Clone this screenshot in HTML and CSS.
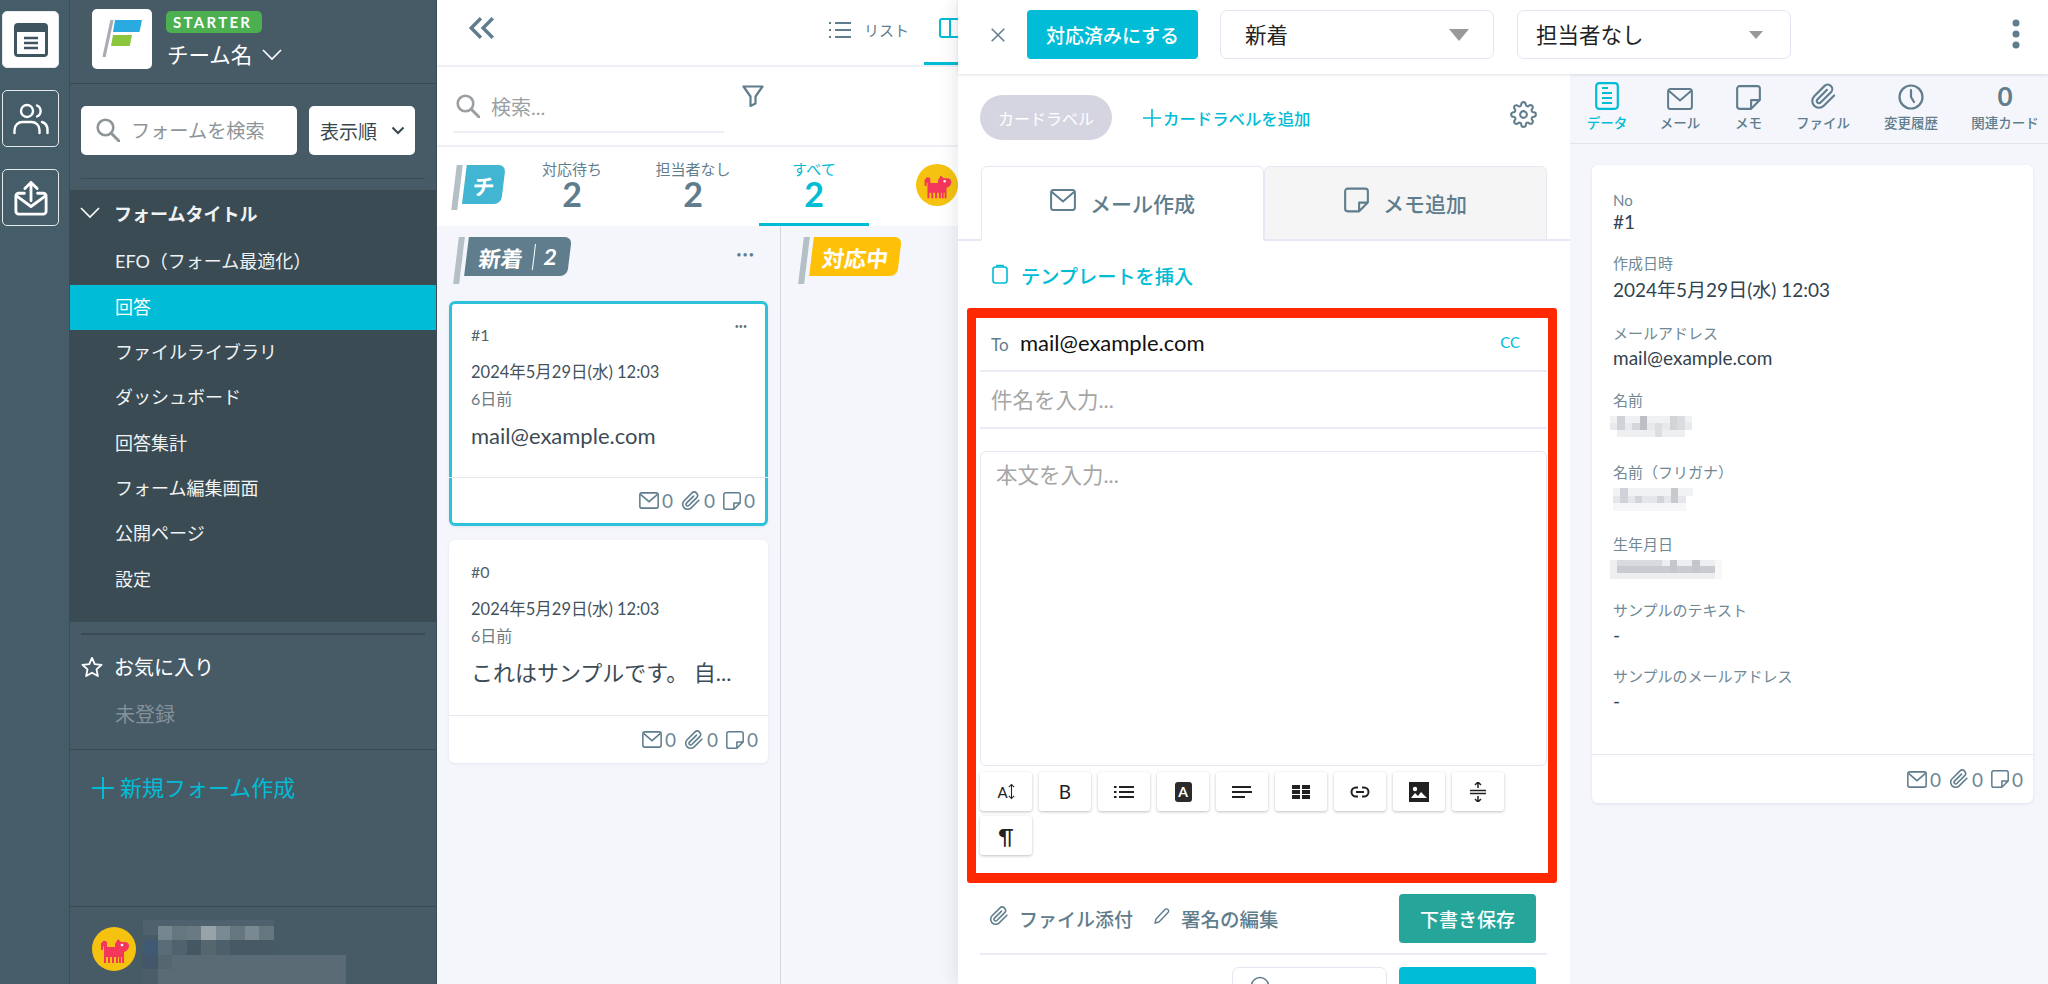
FILE: index.html
```html
<!DOCTYPE html>
<html lang="ja">
<head>
<meta charset="utf-8">
<title>回答</title>
<link rel="stylesheet" href="styles.css">
</head>
<body>
<svg class="defs" width="0" height="0">
  <symbol id="i-mail" viewBox="0 0 26 22"><rect x="1.100" y="1.100" width="23.800" height="19.800" rx="2.500" fill="none" stroke="currentColor" stroke-width="2"/><path d="M2 3l11 9.500L24 3" fill="none" stroke="currentColor" stroke-width="2"/></symbol>
  <symbol id="i-memo" viewBox="0 0 24 24"><path d="M14.500 22.900H3.500a2.400 2.400 0 0 1-2.400-2.400V3.500a2.400 2.400 0 0 1 2.400-2.400h17a2.400 2.400 0 0 1 2.400 2.400V14.500zM22.900 14.500h-8.400v8.400" fill="none" stroke="currentColor" stroke-width="2" stroke-linejoin="round"/></symbol>
  <symbol id="i-clip" viewBox="0 0 24 24"><path d="M21.440 11.050l-9.190 9.190a6 6 0 0 1-8.490-8.490l9.190-9.190a4 4 0 0 1 5.660 5.660l-9.200 9.190a2 2 0 0 1-2.830-2.830l8.490-8.480" fill="none" stroke="currentColor" stroke-width="1.900" stroke-linecap="round" stroke-linejoin="round"/></symbol>
  <symbol id="i-search" viewBox="0 0 24 24"><circle cx="9.500" cy="9.500" r="7.800" fill="none" stroke="currentColor" stroke-width="2.600"/><path d="m15.500 15.500 7.500 7.500" stroke="currentColor" stroke-width="3" stroke-linecap="round"/></symbol>
  <symbol id="i-dog" viewBox="0 0 44 44"><circle cx="22" cy="22" r="22" fill="#f5c30f"/><path d="M10 16c0-3 5-3 5 0v4h8v-3l3-5 3 3h4c3 0 4 2 4 4 0 3-2 5-5 6v11h-2v-6h-1v6h-2v-6h-1v6h-2v-6h-2v6h-2v-6h-2v6h-2v-6h-2v6h-2V20c0-1-1-1-1 0v3H9v-7z" fill="#f5365c"/><circle cx="30" cy="18" r="1.300" fill="#fff"/></symbol>
</svg>

<div class="app">
  <nav class="rail">
    <a class="rail-btn is-active"><svg viewBox="0 0 36 36" width="36" height="36"><rect x="1" y="1" width="34" height="34" rx="4" fill="#3f5560"/><rect x="4" y="10" width="28" height="22" fill="#fff"/><path d="M11 16h14M11 21h14M11 26h14" stroke="#3f5560" stroke-width="2.400"/></svg></a>
    <a class="rail-btn"><svg viewBox="0 0 36 32" width="36" height="32" fill="none" stroke="#fff" stroke-width="2.400" stroke-linecap="round"><circle cx="14" cy="8" r="6"/><path d="M1.500 30v-3c0-5 4-8 8-8h9c4 0 8 3 8 8v3M24 2.500a6 6 0 0 1 0 11M29 19c3 1 5.500 4 5.500 8v3"/></svg></a>
    <a class="rail-btn"><svg viewBox="0 0 36 38" width="34" height="36" fill="none" stroke="#fff" stroke-width="3" stroke-linecap="round" stroke-linejoin="round"><path d="M11 14H5a3 3 0 0 0-3 3v16a3 3 0 0 0 3 3h26a3 3 0 0 0 3-3V17a3 3 0 0 0-3-3h-6"/><path d="m3 17 15 11 15-11M18 22V2.500M11.500 9 18 2.500 24.500 9"/></svg></a>
  </nav>

  <aside class="side">
    <header class="side-head">
      <div class="logo"><svg viewBox="0 0 60 60" width="60" height="60"><path d="M20 11 12 48" stroke="#a9adb3" stroke-width="3.200"/><path d="M23 11h27l-2.500 12H21z" fill="#29abe2"/><path d="M21 26h19l-2.200 11H19z" fill="#8cc63f"/></svg></div>
      <div class="team">
        <span class="plan">STARTER</span>
        <span class="team-name">チーム名<svg class="team-caret" viewBox="0 0 20 12" width="20" height="12"><path d="m1 1 9 9 9-9" fill="none" stroke="#fff" stroke-width="1.600"/></svg></span>
      </div>
    </header>
    <div class="side-tools">
      <div class="form-search"><svg width="24" height="24"><use href="#i-search"/></svg><span>フォームを検索</span></div>
      <div class="form-sort"><span>表示順</span><svg viewBox="0 0 14 9" width="14" height="9"><path d="m1.500 1.500 5.500 5.500 5.500-5.500" fill="none" stroke="#37474f" stroke-width="2"/></svg></div>
    </div>
    <hr class="side-rule">
    <ul class="forms">
      <li class="forms-title"><svg viewBox="0 0 20 12" width="20" height="12"><path d="m1 1 9 9 9-9" fill="none" stroke="#fff" stroke-width="1.600"/></svg>フォームタイトル</li>
      <li>EFO（フォーム最適化）</li>
      <li class="is-active">回答</li>
      <li>ファイルライブラリ</li>
      <li>ダッシュボード</li>
      <li>回答集計</li>
      <li>フォーム編集画面</li>
      <li>公開ページ</li>
      <li>設定</li>
    </ul>
    <hr class="side-rule side-rule-b">
    <div class="fav"><svg viewBox="0 0 24 24" width="22" height="22"><path d="m12 2 3 6.800 7.400.8-5.500 5 1.500 7.300L12 18.200l-6.400 3.700 1.500-7.300-5.500-5 7.400-.8z" fill="none" stroke="#fff" stroke-width="2" stroke-linejoin="round"/></svg>お気に入り</div>
    <div class="fav-empty">未登録</div>
    <div class="new-form"><svg viewBox="0 0 22 22" width="22" height="22"><path d="M11 0v22M0 11h22" stroke="#00bcd4" stroke-width="2"/></svg>新規フォーム作成</div>
    <footer class="side-foot">
      <svg class="foot-avatar" width="44" height="44"><use href="#i-dog"/></svg>
      <svg class="foot-blur" viewBox="0 0 14 4.400" width="203" height="64" shape-rendering="crispEdges">
        <g fill="#556873"><rect x="0" y="0" width="9" height="1" opacity=".5"/></g>
        <rect x="1" y=".4" width="1" height="1" fill="#76868f"/><rect x="2" y=".4" width="1" height="1" fill="#66767f"/><rect x="3" y=".4" width="1" height="1" fill="#6a7a83"/><rect x="4" y=".4" width="1" height="1" fill="#98a3a9"/><rect x="5" y=".4" width="1" height="1" fill="#7a8a93"/><rect x="6" y=".4" width="1" height="1" fill="#66767f"/><rect x="7" y=".4" width="1" height="1" fill="#7a8891"/><rect x="8" y=".4" width="1" height="1" fill="#66767f"/>
        <rect x="0" y="1.400" width="1" height="1" fill="#415a74"/><rect x="1" y="1.400" width="1" height="1" fill="#5a6c76"/><rect x="2" y="1.400" width="1" height="1" fill="#4f626e"/><rect x="3" y="1.400" width="1" height="1" fill="#455862"/><rect x="4" y="1.400" width="1" height="1" fill="#55666f"/><rect x="5" y="1.400" width="1" height="1" fill="#4d5f6a"/><rect x="6" y="1.400" width="3" height="1" fill="#465964"/>
        <rect x="0" y="2.400" width="1" height="1" fill="#43566a"/><rect x="1" y="2.400" width="1" height="1" fill="#55666f"/><rect x="2" y="2.400" width="12" height="1" fill="#5a6b75"/>
        <rect x="0" y="3.400" width="1" height="1" fill="#4a5d69"/><rect x="1" y="3.400" width="13" height="1" fill="#5a6b75"/>
      </svg>
    </footer>
  </aside>

  <main class="board">
    <div class="board-top">
      <svg class="collapse" viewBox="0 0 26 22" width="28" height="24"><path d="M12 2 3 11l9 9M23 2l-9 9 9 9" fill="none" stroke="#5f7d8c" stroke-width="3.200"/></svg>
      <span class="view-tab"><svg viewBox="0 0 22 18" width="22" height="18"><path d="M6 2h16M6 9h16M6 16h16" stroke="#5f7d8c" stroke-width="2"/><path d="M0 2h3M0 9h3M0 16h3" stroke="#5f7d8c" stroke-width="2" stroke-dasharray="2 1"/></svg>リスト</span>
      <span class="view-tab is-active"><svg viewBox="0 0 22 20" width="22" height="20"><rect x="1" y="1" width="20" height="18" rx="2" fill="none" stroke="#00bcd4" stroke-width="2"/><path d="M11 1v18" stroke="#00bcd4" stroke-width="2"/></svg></span>
    </div>
    <div class="board-search">
      <div class="board-input"><svg width="24" height="24"><use href="#i-search"/></svg><span>検索...</span></div>
      <svg class="filter" viewBox="0 0 22 22" width="22" height="22"><path d="M1.500 1.500h19l-7 10v7l-5 2.500v-9.500z" fill="none" stroke="#5f7d8c" stroke-width="2.200" stroke-linejoin="round"/></svg>
    </div>
    <div class="stats">
      <div class="flag flag-team"><i></i><b>チ</b></div>
      <div class="stat"><span>対応待ち</span><strong>2</strong></div>
      <div class="stat"><span>担当者なし</span><strong>2</strong></div>
      <div class="stat is-active"><span>すべて</span><strong>2</strong></div>
      <svg class="stat-avatar" width="42" height="42" viewBox="0 0 44 44"><use href="#i-dog"/></svg>
    </div>
    <div class="columns">
      <section class="col">
        <div class="col-head">
          <div class="flag flag-new"><i></i><b>新着<u></u>2</b></div>
          <span class="dots">•••</span>
        </div>
        <article class="card is-selected">
          <div class="card-body">
            <span class="more">•••</span>
            <div class="card-no">#1</div>
            <div class="card-date">2024年5月29日(水) 12:03</div>
            <div class="card-ago">6日前</div>
            <div class="card-title">mail@example.com</div>
          </div>
          <div class="counts">
            <span><svg width="20" height="17"><use href="#i-mail"/></svg>0</span>
            <span><svg width="20" height="20"><use href="#i-clip"/></svg>0</span>
            <span><svg width="18" height="18"><use href="#i-memo"/></svg>0</span>
          </div>
        </article>
        <article class="card">
          <div class="card-body">
            <div class="card-no">#0</div>
            <div class="card-date">2024年5月29日(水) 12:03</div>
            <div class="card-ago">6日前</div>
            <div class="card-title">これはサンプルです。 自...</div>
          </div>
          <div class="counts">
            <span><svg width="20" height="17"><use href="#i-mail"/></svg>0</span>
            <span><svg width="20" height="20"><use href="#i-clip"/></svg>0</span>
            <span><svg width="18" height="18"><use href="#i-memo"/></svg>0</span>
          </div>
        </article>
      </section>
      <section class="col col-b">
        <div class="col-head"><div class="flag flag-doing"><i></i><b>対応中</b></div></div>
      </section>
    </div>
  </main>

  <div class="detail">
    <div class="topbar">
      <svg class="close" viewBox="0 0 14 14" width="14" height="14"><path d="m.7.7 12.600 12.600M13.300.7.700 13.300" stroke="#5f7d8c" stroke-width="1.500"/></svg>
      <button class="btn btn-done">対応済みにする</button>
      <div class="select select-a"><span>新着</span><i class="tri"></i></div>
      <div class="select select-b"><span>担当者なし</span><i class="tri tri-s"></i></div>
      <svg class="kebab" viewBox="0 0 8 30" width="8" height="30"><circle cx="4" cy="4" r="3.500"/><circle cx="4" cy="15" r="3.500"/><circle cx="4" cy="26" r="3.500"/></svg>
    </div>
    <div class="detail-row">
      <div class="compose">
        <div class="labels">
          <span class="pill">カードラベル</span>
          <span class="add-label"><svg viewBox="0 0 18 18" width="18" height="18"><path d="M9 0v18M0 9h18" stroke="#00bcd4" stroke-width="1.600"/></svg>カードラベルを追加</span>
          <svg class="gear" viewBox="0 0 24 24" width="27" height="27" fill="none" stroke="#5f7d8c" stroke-width="1.800"><circle cx="12" cy="12" r="3"/><path d="M19.400 15a1.650 1.650 0 0 0 .33 1.820l.06.06a2 2 0 0 1 0 2.830 2 2 0 0 1-2.830 0l-.06-.06a1.650 1.650 0 0 0-1.820-.33 1.650 1.650 0 0 0-1 1.510V21a2 2 0 0 1-2 2 2 2 0 0 1-2-2v-.09A1.650 1.650 0 0 0 9 19.400a1.650 1.650 0 0 0-1.820.33l-.06.06a2 2 0 0 1-2.830 0 2 2 0 0 1 0-2.830l.06-.06a1.650 1.650 0 0 0 .33-1.820 1.650 1.650 0 0 0-1.510-1H3a2 2 0 0 1-2-2 2 2 0 0 1 2-2h.09A1.650 1.650 0 0 0 4.600 9a1.650 1.650 0 0 0-.33-1.820l-.06-.06a2 2 0 0 1 0-2.830 2 2 0 0 1 2.830 0l.06.06a1.650 1.650 0 0 0 1.820.33H9a1.650 1.650 0 0 0 1-1.510V3a2 2 0 0 1 2-2 2 2 0 0 1 2 2v.09a1.650 1.650 0 0 0 1 1.510 1.650 1.650 0 0 0 1.820-.33l.06-.06a2 2 0 0 1 2.830 0 2 2 0 0 1 0 2.830l-.06.06a1.650 1.650 0 0 0-.33 1.820V9a1.650 1.650 0 0 0 1.510 1H21a2 2 0 0 1 2 2 2 2 0 0 1-2 2h-.09a1.650 1.650 0 0 0-1.510 1z"/></svg>
        </div>
        <div class="tabs">
          <div class="tab is-active"><svg width="26" height="22"><use href="#i-mail"/></svg>メール作成</div>
          <div class="tab"><svg width="25" height="28"><use href="#i-memo"/></svg>メモ追加</div>
        </div>
        <div class="template"><svg viewBox="0 0 16 20" width="16" height="20"><rect x="1" y="3" width="14" height="16" rx="2.500" fill="none" stroke="#00bcd4" stroke-width="1.600"/><path d="M5 3V1.500h6V3" fill="none" stroke="#00bcd4" stroke-width="1.600"/></svg>テンプレートを挿入</div>
        <div class="mail-box">
          <div class="mail-to"><span class="to-label">To</span><span class="to-value">mail@example.com</span><span class="cc">CC</span></div>
          <div class="mail-subject">件名を入力...</div>
          <div class="mail-body">本文を入力...</div>
          <div class="toolbar">
            <span class="tool"><span class="t-a">A</span><svg viewBox="0 0 8 18" width="7" height="17"><path d="M4 1v16M1 4l3-3 3 3M1 14l3 3 3-3" fill="none" stroke="#222" stroke-width="1.200"/></svg></span>
            <span class="tool t-b">B</span>
            <span class="tool"><svg viewBox="0 0 20 14" width="20" height="14"><path d="M5 2h15M5 7h15M5 12h15" stroke="#222" stroke-width="2"/><path d="M0 2h2.500M0 7h2.500M0 12h2.500" stroke="#222" stroke-width="2"/></svg></span>
            <span class="tool"><span class="t-fill">A</span></span>
            <span class="tool"><svg viewBox="0 0 20 14" width="20" height="14"><path d="M0 2h19M0 7h20M0 12h13" stroke="#222" stroke-width="2"/></svg></span>
            <span class="tool"><svg viewBox="0 0 18 14" width="18" height="14"><path d="M0 0h8v4H0zM10 0h8v4h-8zM0 5h8v4H0zM10 5h8v4h-8zM0 10h8v4H0zM10 10h8v4h-8z" fill="#222"/></svg></span>
            <span class="tool"><svg viewBox="0 0 20 12" width="20" height="12" fill="none" stroke="#222" stroke-width="2"><path d="M8 1.500H6a4.500 4.500 0 0 0 0 9h2M12 1.500h2a4.500 4.500 0 0 1 0 9h-2M6 6h8"/></svg></span>
            <span class="tool"><svg viewBox="0 0 20 20" width="20" height="20"><path d="M0 0h20v20H0z" fill="#222"/><circle cx="6" cy="7" r="2.200" fill="#fff"/><path d="m2 16 4-5 3 3 3-4 6 6z" fill="#fff"/></svg></span>
            <span class="tool"><svg viewBox="0 0 16 20" width="16" height="20" fill="none" stroke="#222" stroke-width="1.500"><path d="M0 8.500h16M0 11.500h16M8 0v6M5 3l3-3 3 3M8 20v-6M5 17l3 3 3-3"/></svg></span>
            <span class="tool t-p">¶</span>
          </div>
        </div>
        <div class="compose-foot">
          <span class="foot-link"><svg width="20" height="20"><use href="#i-clip"/></svg>ファイル添付</span>
          <span class="foot-link"><svg viewBox="0 0 18 18" width="18" height="18"><path d="M12 2.500a2 2 0 0 1 3 3L6 15l-4 1 1-4z" fill="none" stroke="#5f7d8c" stroke-width="1.400" stroke-linejoin="round"/></svg>署名の編集</span>
          <button class="btn btn-draft">下書き保存</button>
        </div>
        <div class="compose-send">
          <span class="schedule"><svg viewBox="0 0 20 20" width="20" height="20"><circle cx="10" cy="10" r="8.500" fill="none" stroke="#5f7d8c" stroke-width="1.600"/></svg></span>
          <button class="btn btn-send"></button>
        </div>
      </div>

      <aside class="info">
        <div class="info-tabs">
          <div class="info-tab is-active"><svg viewBox="0 0 24 28" width="24" height="28"><rect x="1.200" y="1.200" width="21.600" height="25.600" rx="3" fill="none" stroke="#00bcd4" stroke-width="2.200"/><path d="M7 6h6M7 11h10M7 16h10M7 21h10" stroke="#00bcd4" stroke-width="2"/></svg><span>データ</span></div>
          <div class="info-tab"><svg width="26" height="22"><use href="#i-mail"/></svg><span>メール</span></div>
          <div class="info-tab"><svg width="25" height="25"><use href="#i-memo"/></svg><span>メモ</span></div>
          <div class="info-tab"><svg width="27" height="27"><use href="#i-clip"/></svg><span>ファイル</span></div>
          <div class="info-tab"><svg viewBox="0 0 26 26" width="26" height="26" fill="none" stroke="#5f7d8c" stroke-width="2.200"><circle cx="13" cy="13" r="11.500"/><path d="M13 6v7l3 5" stroke-linecap="round"/></svg><span>変更履歴</span></div>
          <div class="info-tab"><strong>0</strong><span>関連カード</span></div>
        </div>
        <div class="info-card">
          <div class="fields">
            <div class="field f-no"><label>No</label><p>#1</p></div>
            <div class="field f-date"><label>作成日時</label><p>2024年5月29日(水) 12:03</p></div>
            <div class="field f-mail"><label>メールアドレス</label><p>mail@example.com</p></div>
            <div class="field f-name"><label>名前</label>
              <svg class="blur" viewBox="0 0 11 3" width="82" height="21" preserveAspectRatio="none" shape-rendering="crispEdges"><rect width="11" height="1" fill="#f0f1f3"/><rect y="1" width="11" height="1" fill="#e8e9ec"/><rect x="1" y="2" width="9" height="1" fill="#eeeff1"/><rect x="1" width="1" height="2" fill="#cfd2d6"/><rect x="4" width="1" height="2" fill="#bcc0c5"/><rect x="3" y="1" width="1" height="1" fill="#d4d6da"/><rect x="6" y="1" width="1" height="2" fill="#dcdee1"/><rect x="8" width="1" height="2" fill="#d2d4d8"/><rect x="9" width="1" height="2" fill="#dadcdf"/></svg></div>
            <div class="field f-kana"><label>名前（フリガナ）</label>
              <svg class="blur blur-kana" viewBox="0 0 11 3" width="80" height="23" preserveAspectRatio="none" shape-rendering="crispEdges"><rect width="11" height="1" fill="#f1f2f4"/><rect y="1" width="10" height="1" fill="#e4e6e9"/><rect y="2" width="10" height="1" fill="#f6f6f8"/><rect x="1" y="0" width="1" height="2" fill="#cfd2d6"/><rect x="3" y="1" width="1" height="1" fill="#d2d4d8"/><rect x="6" y="1" width="1" height="1" fill="#d0d3d7"/><rect x="8" y="0" width="1" height="2" fill="#c6c9cd"/></svg></div>
            <div class="field f-birth"><label>生年月日</label>
              <svg class="blur" viewBox="0 0 15 3" width="112" height="19" preserveAspectRatio="none" shape-rendering="crispEdges"><rect width="15" height="3" fill="#eceef0"/><rect x="1" y="1" width="13" height="1" fill="#c8cbd0"/><rect x="1" y="0" width="6" height="1" fill="#d8dadd"/><rect x="8" y="0" width="1" height="2" fill="#c3c6cb"/><rect x="11" y="0" width="1" height="2" fill="#c3c6cb"/><rect x="14" y="0" width="1" height="3" fill="#f8f8f9"/></svg></div>
            <div class="field f-text"><label>サンプルのテキスト</label><p>-</p></div>
            <div class="field f-text"><label>サンプルのメールアドレス</label><p>-</p></div>
          </div>
          <div class="counts">
            <span><svg width="20" height="17"><use href="#i-mail"/></svg>0</span>
            <span><svg width="20" height="20"><use href="#i-clip"/></svg>0</span>
            <span><svg width="18" height="18"><use href="#i-memo"/></svg>0</span>
          </div>
        </div>
      </aside>
    </div>
  </div>
</div>
</body>
</html>
```

FILE: styles.css
```css
* { box-sizing: border-box; }
html, body { margin: 0; height: 984px; overflow: hidden; }
body { font-family: Lato, "Noto Sans CJK JP", sans-serif; color: #37474f; background: #f4f6fb; }
.defs { position: absolute; }
ul { list-style: none; margin: 0; padding: 0; }
hr { border: 0; margin: 0; }
button { font: inherit; border: 0; }
p { margin: 0; }

.app { display: flex; width: 2048px; height: 984px; overflow: hidden; }

/* rail */
.rail { width: 70px; flex: none; background: #455c69; border-right: 1px solid #3a4c56; padding: 11px 0 0 2px; display: flex; flex-direction: column; gap: 22px; }
.rail-btn { width: 57px; height: 57px; border: 1px solid #e6eaec; border-radius: 5px; display: flex; align-items: center; justify-content: center; }
.rail-btn.is-active { background: #fff; }

/* sidebar */
.side { width: 366px; flex: none; background: #475b67; color: #fff; display: flex; flex-direction: column; }
.side-head { height: 84px; border-bottom: 1px solid #394a53; padding: 9px 0 0 22px; display: flex; gap: 14px; }
.logo { width: 60px; height: 60px; background: #fff; border-radius: 5px; }
.team { display: flex; flex-direction: column; align-items: flex-start; padding-top: 2px; }
.plan { background: #4caf50; font-size: 15px; font-weight: 700; letter-spacing: 2.300px; line-height: 22px; height: 22px; border-radius: 5px; padding: 0 7px; width: 96px; white-space: nowrap; }
.team-name { font-size: 21.500px; line-height: 30px; margin-top: 7px; display: flex; align-items: center; gap: 10px; padding-left: 1px; }
.side-tools { display: flex; gap: 12px; padding: 22px 0 0 11px; }
.form-search { width: 216px; height: 49px; background: #fff; border-radius: 5px; color: #8e9599; display: flex; align-items: center; gap: 11px; padding-left: 15px; font-size: 19.200px; }
.form-sort { width: 106px; height: 49px; background: #fff; border-radius: 5px; color: #37474f; display: flex; align-items: center; gap: 14px; padding-left: 11px; font-size: 19px; }
.side-rule { height: 1px; background: #394a53; margin: 23px 11px 0; width: 344px; }
.forms { background: #3a4b53; margin-top: 11px; padding: 2px 0 20px; height: 432px; }
.forms li { height: 45.300px; line-height: 45.300px; font-size: 18px; padding-left: 45px; color: #f0f3f4; }
.forms .is-active { background: #00bcd6; color: #fff; }
.forms .forms-title { font-weight: 700; display: flex; align-items: center; height: 47.800px; padding-bottom: 2.500px; }
.forms-title svg { margin: -3px 14px 0 -35px; }
.side-rule-b { margin-top: 11px; height: 2px; }
.fav { display: flex; align-items: center; height: 24px; margin-top: 20px; padding-left: 11px; gap: 11px; font-size: 20px; }
.fav-empty { font-size: 20px; color: #84919a; margin-top: 23px; padding-left: 45px; line-height: 24px; height: 24px; }
.new-form { border-top: 1px solid #394a53; margin-top: 23px; height: 158px; padding: 25px 0 0 22px; display: flex; align-items: flex-start; gap: 6px; color: #00bcd4; font-size: 22px; line-height: 26px; }
.new-form svg { margin-top: 2px; }
.side-foot { border-top: 1px solid #394a53; flex: 1; display: flex; padding: 20px 0 0 22px; gap: 7px; align-items: flex-start; }
.foot-avatar { flex: none; }
.foot-blur { flex: none; margin-top: -7px; }

/* board */
.board { width: 522px; flex: none; background: #fff; display: flex; flex-direction: column; border-left: 1px solid #3a4c56; }
.board-top { height: 67px; border-bottom: 2px solid #edeff4; display: flex; align-items: flex-start; padding-left: 31px; flex: none; }
.collapse { margin-top: 16px; flex: none; }
.view-tab { display: flex; align-items: center; gap: 13px; font-size: 15px; color: #5f7d8c; height: 65px; padding-bottom: 6px; white-space: nowrap; flex: none; }
.view-tab:nth-child(2) { margin-left: 333px; }
.view-tab.is-active { border-bottom: 3px solid #00bcd4; margin-left: 15px; width: 60px; padding-left: 15px; }
.board-search { height: 80px; border-bottom: 2px solid #edeff4; display: flex; flex: none; padding: 0 0 0 16px; }
.board-input { width: 271px; height: 66px; border-bottom: 2px solid #edeff4; display: flex; align-items: center; gap: 11px; padding: 14px 0 0 3px; color: #9a9fa3; font-size: 20px; }
.filter { margin: 18px 0 0 18px; }
.stats { height: 79px; flex: none; display: flex; padding: 18px 0 0 17px; position: relative; }
.flag { display: flex; transform: skewX(-7deg); }
.flag i { background: #b4bfc6; width: 6px; margin-right: 4px; }
.flag b { color: #fff; font-weight: 500; display: flex; align-items: center; justify-content: center; border-radius: 0 7px 7px 0; }
.flag-team { height: 45px; width: 50px; }
.flag-team i { height: 45px; }
.flag-team b { background: #42b5d3; width: 39px; height: 39px; font-size: 22px; font-weight: 700; }
.stat { display: flex; flex-direction: column; align-items: center; color: #5f7d8c; font-size: 15px; position: absolute; top: 13px; width: 110px; height: 66px; line-height: 19px; }
.stat strong { font-size: 34px; line-height: 30px; font-weight: 700; }
.stat:nth-of-type(2) { left: 80px; }
.stat:nth-of-type(3) { left: 201px; }
.stat.is-active { left: 322px; color: #00bcd4; border-bottom: 3px solid #00bcd4; }
.stat-avatar { position: absolute; left: 479px; top: 17px; }
.columns { flex: 1; display: flex; background: #f4f6fb; }
.col { width: 344px; flex: none; border-right: 1px solid #d5d9de; padding: 0 12px; }
.col-b { border: 0; padding-left: 14px; }
.col-head { height: 75px; padding: 11px 0 0 6px; display: flex; justify-content: space-between; }
.flag-new { margin-left: 1px; }
.flag-new, .flag-doing { height: 47px; }
.flag-new i, .flag-doing i { height: 47px; }
.flag-new b, .flag-doing b { height: 39px; font-size: 22px; font-weight: 700; font-style: normal; }
.flag-new b { background: #5f7d8c; width: 103px; }
.flag-new u { width: 1px; height: 26px; background: #fff; margin: 0 10px; text-decoration: none; }
.flag-doing b { background: #ffc107; width: 88px; }
.dots { font-size: 9px; letter-spacing: 1px; color: #5f7d8c; margin: 12px 13px 0 0; }
.card { background: #fff; width: 319px; height: 223px; border-radius: 6px; box-shadow: 0 1px 3px rgba(80,90,140,.1); margin-bottom: 14px; display: flex; flex-direction: column; position: relative; }
.card.is-selected { border: 3px solid #2ec2da; height: 225px; }
.card-body { flex: 1; padding: 22px 20px 0 22px; border-bottom: 1px solid #e6e8ef; position: relative; }
.is-selected .card-body { padding: 21px 19px 0 22px; margin: 0 -3px; }
.more { position: absolute; right: 21px; top: 18px; font-size: 7px; letter-spacing: 0; color: #5f6f78; }
.card-no { font-size: 16px; line-height: 20px; color: #50616b; }
.card-date { font-size: 16.500px; line-height: 22px; margin-top: 16px; color: #43525c; white-space: nowrap; }
.card-ago { font-size: 16px; line-height: 20px; margin-top: 6px; color: #6d7a82; }
.card-title { font-size: 22px; line-height: 28px; margin-top: 13px; color: #3c4b55; white-space: nowrap; font-weight: 400; }
.counts { height: 47px; display: flex; justify-content: flex-end; align-items: center; gap: 8px; padding-right: 10px; color: #6d8896; font-size: 19px; flex: none; }
.is-selected .counts { height: 45px; }
.counts span { display: flex; align-items: center; gap: 3px; }
.counts svg { color: #5f7d8c; }

/* detail */
.detail { width: 1090px; flex: none; display: flex; flex-direction: column; z-index: 2; box-shadow: -3px 0 16px rgba(30,40,60,.1); }
.topbar { height: 74px; flex: none; background: #fff; display: flex; padding-top: 10px; box-shadow: 0 1px 3px rgba(40,50,80,.14); z-index: 2; }
.close { margin: 18px 22px 0 33px; }
.btn { color: #fff; border-radius: 4px; font-size: 19px; font-weight: 500; padding: 0; }
.btn-done { width: 171px; height: 49px; background: #00bcd6; }
.select { height: 49px; background: #fff; border: 1px solid #e6e4f2; border-radius: 7px; font-size: 21.500px; color: #222; display: flex; align-items: center; padding: 0 24px 3px 24px; justify-content: space-between; margin-left: 22px; width: 274px; }
.select-b { padding: 0 27px 3px 18px; margin-left: 23px; }
.tri { width: 0; height: 0; border-left: 10px solid transparent; border-right: 10px solid transparent; border-top: 12px solid #999; margin-top: 3px; }
.tri-s { border-width: 8px 7px 0; border-top-color: #999; }
.kebab { fill: #5f7d8c; margin: 9px 0 0 221px; }
.detail-row { flex: 1; display: flex; min-height: 0; }
.compose { width: 612px; flex: none; background: #fff; padding-top: 21px; }
.labels { height: 45px; display: flex; align-items: center; padding-left: 22px; margin-bottom: 26px; }
.pill { width: 132px; height: 45px; border-radius: 23px; background: #d5d5e1; color: #fff; font-size: 16px; display: flex; align-items: center; justify-content: center; }
.add-label { display: flex; align-items: center; gap: 2px; color: #00bcd4; font-size: 16.400px; margin-left: 31px; font-weight: 500; }
.gear { margin-left: 199px; margin-top: -6px; }
.tabs { height: 75px; border-bottom: 2px solid #e8e8f4; padding-left: 23px; display: flex; }
.tab { width: 283px; height: 75px; border: 1px solid #e8e8f4; border-bottom: 2px solid #e8e8f4; border-radius: 6px 6px 0 0; background: #f5f5f5; display: flex; align-items: center; justify-content: center; gap: 14px; font-size: 21px; font-weight: 500; color: #5f7d8c; }
.tab svg { margin-top: -6px; }
.tab.is-active { background: #fff; border-bottom-color: #fff; }
.template { height: 67px; display: flex; align-items: center; gap: 13px; padding: 2px 0 0 34px; color: #00bcd4; font-size: 19.200px; font-weight: 500; }
.template svg { margin-top: -4px; }
.mail-box { margin-left: 9px; width: 590px; height: 575px; border: solid #ff2800; border-width: 10px 9px; border-radius: 3px; background: #fff; padding: 0 1px 0 4px; }
.mail-to { height: 54px; border-bottom: 2px solid #ecebf5; display: flex; align-items: center; padding: 0 0 4px 11px; }
.to-label { font-size: 17px; color: #5f7d8c; padding-top: 4px; width: 29px; }
.to-value { font-size: 22px; color: #111; flex: 1; }
.cc { color: #00bcd4; font-size: 15px; margin-right: 27px; }
.mail-subject { height: 57px; border-bottom: 2px solid #ecebf5; display: flex; align-items: center; padding: 0 0 2px 11px; font-size: 21.500px; color: #a6a6a6; }
.mail-body { margin-top: 22px; height: 315px; border: 1px solid #e6e5f1; border-radius: 6px; padding: 9px 15px; font-size: 21.500px; line-height: 28px; color: #a6a6a6; }
.toolbar { display: flex; flex-wrap: wrap; gap: 5px 7px; margin-top: 6px; width: 540px; }
.tool { width: 52px; height: 39px; background: #fff; border-radius: 3px; box-shadow: 0 1px 3px rgba(0,0,0,.25); display: flex; align-items: center; justify-content: center; color: #222; font-size: 16px; }
.t-a { font-size: 15px; font-weight: 400; }
.t-b { font-size: 19px; font-weight: 400; }
.t-p { font-size: 22px; font-weight: 400; }
.t-fill { width: 17px; height: 20px; border-radius: 3px; background: #2b2b2b; color: #fff; font-size: 14px; font-weight: 700; display: flex; align-items: center; justify-content: center; }
.compose-foot { width: 567px; margin-left: 22px; height: 72px; border-bottom: 2px solid #ecebf5; display: flex; align-items: center; padding: 0 11px 0 9px; color: #5f7d8c; font-size: 19px; font-weight: 500; }
.foot-link { display: flex; align-items: center; gap: 10px; margin-right: 20px; }
.foot-link + .foot-link { font-size: 19.500px; }
.foot-link svg { margin-top: -4px; }
.btn-draft { margin-left: auto; width: 137px; height: 49px; background: #26a69a; }
.compose-send { display: flex; justify-content: flex-end; gap: 12px; padding: 12px 34px 0 0; }
.schedule { width: 155px; height: 49px; border: 1px solid #e6e5f1; border-radius: 7px; padding: 8px 0 0 17px; }
.btn-send { width: 137px; height: 49px; background: #00bcd6; }

/* info */
.info { flex: 1; background: #f4f6fb; }
.info-tabs { height: 70px; border-bottom: 1px solid #e4e5ea; display: flex; padding: 5px 0 0 2px; }
.info-tab { display: flex; flex-direction: column; align-items: center; justify-content: flex-end; height: 53px; width: 72px; font-size: 13.500px; line-height: 18px; font-weight: 500; color: #5f7d8c; gap: 4px; white-space: nowrap; }
.info-tab.is-active { color: #00bcd4; margin-left: -2px; width: 74px; }
.info-tab:nth-child(3) { width: 65px; }
.info-tab:nth-child(4) { width: 84px; }
.info-tab:nth-child(5) { width: 92px; }
.info-tab:nth-child(6) { width: 96px; }
.info-tab strong { font-size: 26px; line-height: 28px; font-weight: 700; }
.info-card { margin: 21px 0 0 22px; width: 441px; height: 638px; background: #fff; border-radius: 6px; box-shadow: 0 1px 3px rgba(80,90,140,.12); display: flex; flex-direction: column; }
.fields { flex: 1; padding: 25px 0 0 21px; border-bottom: 1px solid #e6e5f1; }
.field label { display: block; font-size: 15px; line-height: 20px; color: #6f8894; }
.field p { font-size: 19px; line-height: 24px; color: #33434f; }
.f-no { height: 63px; }
.f-date { height: 70px; }
.f-date p { margin-top: 5px; }
.f-mail { height: 67px; }
.f-mail p { margin-top: 3px; }
.f-name { height: 72px; }
.f-kana { height: 72px; }
.f-birth { height: 66px; }
.f-text { height: 66px; }
.f-text p { margin-top: 3px; }
.blur { display: block; margin: 6px 0 0 -3px; }
.blur-kana { margin-left: 0; }
.info-card .counts { height: 48px; padding-right: 10px; }
```
